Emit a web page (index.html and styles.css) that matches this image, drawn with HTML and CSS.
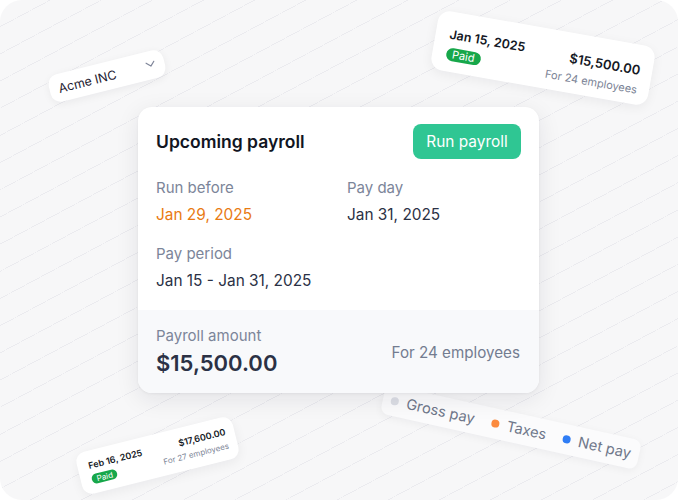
FILE: index.html
```html
<!DOCTYPE html>
<html>
<head>
<meta charset="utf-8">
<link rel="stylesheet" href="styles.css">
</head>
<body>
<div class="canvas">
  <div class="legend">
    <span class="item"><span class="dot dot-gross"></span>Gross pay</span>
    <span class="item"><span class="dot dot-taxes"></span>Taxes</span>
    <span class="item"><span class="dot dot-net"></span>Net pay</span>
  </div>

  <div class="select">
    <span class="select-label">Acme INC</span>
    <svg class="chevron" width="10" height="6" viewBox="0 0 10 6"><path d="M1 1l4 4 4-4" fill="none" stroke="#80869a" stroke-width="1.2" stroke-linecap="round" stroke-linejoin="round"/></svg>
  </div>

  <div class="mini mini-top">
    <div class="mini-col">
      <span class="mini-date">Jan 15, 2025</span>
      <span class="badge">Paid</span>
    </div>
    <div class="mini-col mini-right">
      <span class="mini-amount">$15,500.00</span>
      <span class="mini-sub">For 24 employees</span>
    </div>
  </div>

  <div class="mini mini-bottom">
    <div class="mini-col">
      <span class="mini-date">Feb 16, 2025</span>
      <span class="badge">Paid</span>
    </div>
    <div class="mini-col mini-right">
      <span class="mini-amount">$17,600.00</span>
      <span class="mini-sub">For 27 employees</span>
    </div>
  </div>

  <div class="card">
    <div class="card-body">
      <div class="card-head">
        <h2 class="title">Upcoming payroll</h2>
        <button class="btn">Run payroll</button>
      </div>
      <div class="fields">
        <div class="field">
          <div class="label">Run before</div>
          <div class="value value-warn">Jan 29, 2025</div>
        </div>
        <div class="field">
          <div class="label">Pay day</div>
          <div class="value">Jan 31, 2025</div>
        </div>
        <div class="field">
          <div class="label">Pay period</div>
          <div class="value">Jan 15 - Jan 31, 2025</div>
        </div>
      </div>
    </div>
    <div class="card-foot">
      <div>
        <div class="label">Payroll amount</div>
        <div class="amount">$15,500.00</div>
      </div>
      <div class="foot-sub">For 24 employees</div>
    </div>
  </div>
</div>
</body>
</html>
```

FILE: styles.css
```css
* { box-sizing: border-box; }
html, body { margin: 0; padding: 0; background: #ffffff; }
body { font-family: Inter, "Noto Sans", sans-serif; }

.canvas {
  position: relative;
  width: 678px;
  height: 500px;
  overflow: hidden;
  border-radius: 22px;
  background-color: #f7f7f8;
  background-image: repeating-linear-gradient(152deg, rgba(0,0,0,0) 0 23.2px, #ebebef 23.2px 24px);
  padding: 107px 0 0 138px;
}

/* main card */
.card {
  position: relative;
  z-index: 2;
  width: 401px;
  height: 286px;
  background: #ffffff;
  border-radius: 14px;
  box-shadow: 0 6px 24px rgba(20, 24, 40, 0.09), 0 1px 3px rgba(20, 24, 40, 0.05);
  overflow: hidden;
  display: flex;
  flex-direction: column;
}
.card-body { padding: 17px 18px 19px 18px; }
.card-head {
  display: flex;
  justify-content: space-between;
  align-items: center;
  height: 35px;
}
.title {
  margin: 0;
  font-size: 17.5px;
  font-weight: 600;
  color: #111522;
}
.btn {
  height: 35px;
  width: 108px;
  border: 0;
  border-radius: 8px;
  background: #2fc693;
  color: #ffffff;
  font-family: inherit;
  font-size: 15.4px;
  font-weight: 400;
  padding: 0;
}
.fields {
  display: grid;
  grid-template-columns: 191px 1fr;
  row-gap: 19px;
  margin-top: 19px;
}
.field { display: flex; flex-direction: column; gap: 7px; }
.label {
  font-size: 15px;
  line-height: 20px;
  color: #7c8599;
}
.value {
  font-size: 15.4px;
  line-height: 20px;
  color: #2b3145;
}
.value-warn { color: #e97a12; }

.card-foot {
  flex: 1;
  background: #f8f9fb;
  padding: 16px 19px 16px 18px;
  display: flex;
  justify-content: space-between;
  align-items: center;
}
.amount {
  font-size: 22px;
  line-height: 30px;
  font-weight: 600;
  color: #2b3145;
  margin-top: 2px;
}
.foot-sub {
  font-size: 15.2px;
  color: #737c90;
}

/* floating select */
.select {
  position: absolute;
  left: 48px;
  top: 62px;
  width: 118px;
  height: 28px;
  border-radius: 10px;
  background: #ffffff;
  box-shadow: 0 2px 8px rgba(20, 24, 40, 0.06);
  transform: rotate(-14deg);
  display: flex;
  align-items: center;
  justify-content: space-between;
  padding: 0 9px 0 9px;
}
.select-label { font-size: 12.5px; color: #1e2130; }
.chevron { display: block; margin-top: -2px; }

/* mini payment cards */
.mini {
  position: absolute;
  background: #ffffff;
  border-radius: 12px;
  box-shadow: 0 3px 12px rgba(20, 24, 40, 0.06);
  display: flex;
  justify-content: space-between;
}
.mini-col { display: flex; flex-direction: column; align-items: flex-start; }
.mini-right { align-items: flex-end; }
.mini-date { font-weight: 600; color: #141824; }
.mini-amount { font-weight: 600; color: #141824; }
.mini-sub { color: #7d8597; }
.badge {
  background: #17a74a;
  color: #ffffff;
  border-radius: 999px;
}

.mini-top {
  left: 433px;
  top: 28px;
  width: 220px;
  height: 60px;
  transform: rotate(10deg);
  padding: 15px 12px 0 14px;
}
.mini-top .mini-date { font-size: 12.5px; line-height: 16px; }
.mini-top .badge { font-size: 11px; line-height: 13px; padding: 0 6px; margin-top: 5px; }
.mini-top .mini-right { padding-top: 2px; }
.mini-top .mini-amount { font-size: 13px; line-height: 16px; }
.mini-top .mini-sub { font-size: 11px; line-height: 14px; margin-top: 5px; }

.mini-bottom {
  left: 77px;
  top: 434px;
  width: 161px;
  height: 43px;
  border-radius: 10px;
  transform: rotate(-14deg);
  padding: 9px 9px 0 11px;
}
.mini-bottom .mini-date { font-size: 9px; line-height: 12px; }
.mini-bottom .badge { font-size: 8px; line-height: 10px; padding: 0 5px; margin-top: 3px; }
.mini-bottom .mini-amount { font-size: 9px; line-height: 12px; }
.mini-bottom .mini-sub { font-size: 8px; line-height: 10px; margin-top: 3px; }

/* legend */
.legend {
  position: absolute;
  z-index: 1;
  left: 380px;
  top: 412px;
  width: 262px;
  height: 30px;
  border-radius: 8px;
  background: #fbfbfc;
  box-shadow: 0 2px 8px rgba(20, 24, 40, 0.05);
  transform: rotate(12.5deg);
  display: flex;
  align-items: center;
  gap: 17px;
  padding: 0 0 0 8px;
}
.item {
  display: flex;
  align-items: center;
  gap: 8px;
  font-size: 14.6px;
  color: #6f778a;
}
.dot { width: 8px; height: 8px; border-radius: 50%; display: block; }
.dot-gross { background: #dcdee5; }
.dot-taxes { background: #fb8a3e; }
.dot-net { background: #2f7df5; }
```
